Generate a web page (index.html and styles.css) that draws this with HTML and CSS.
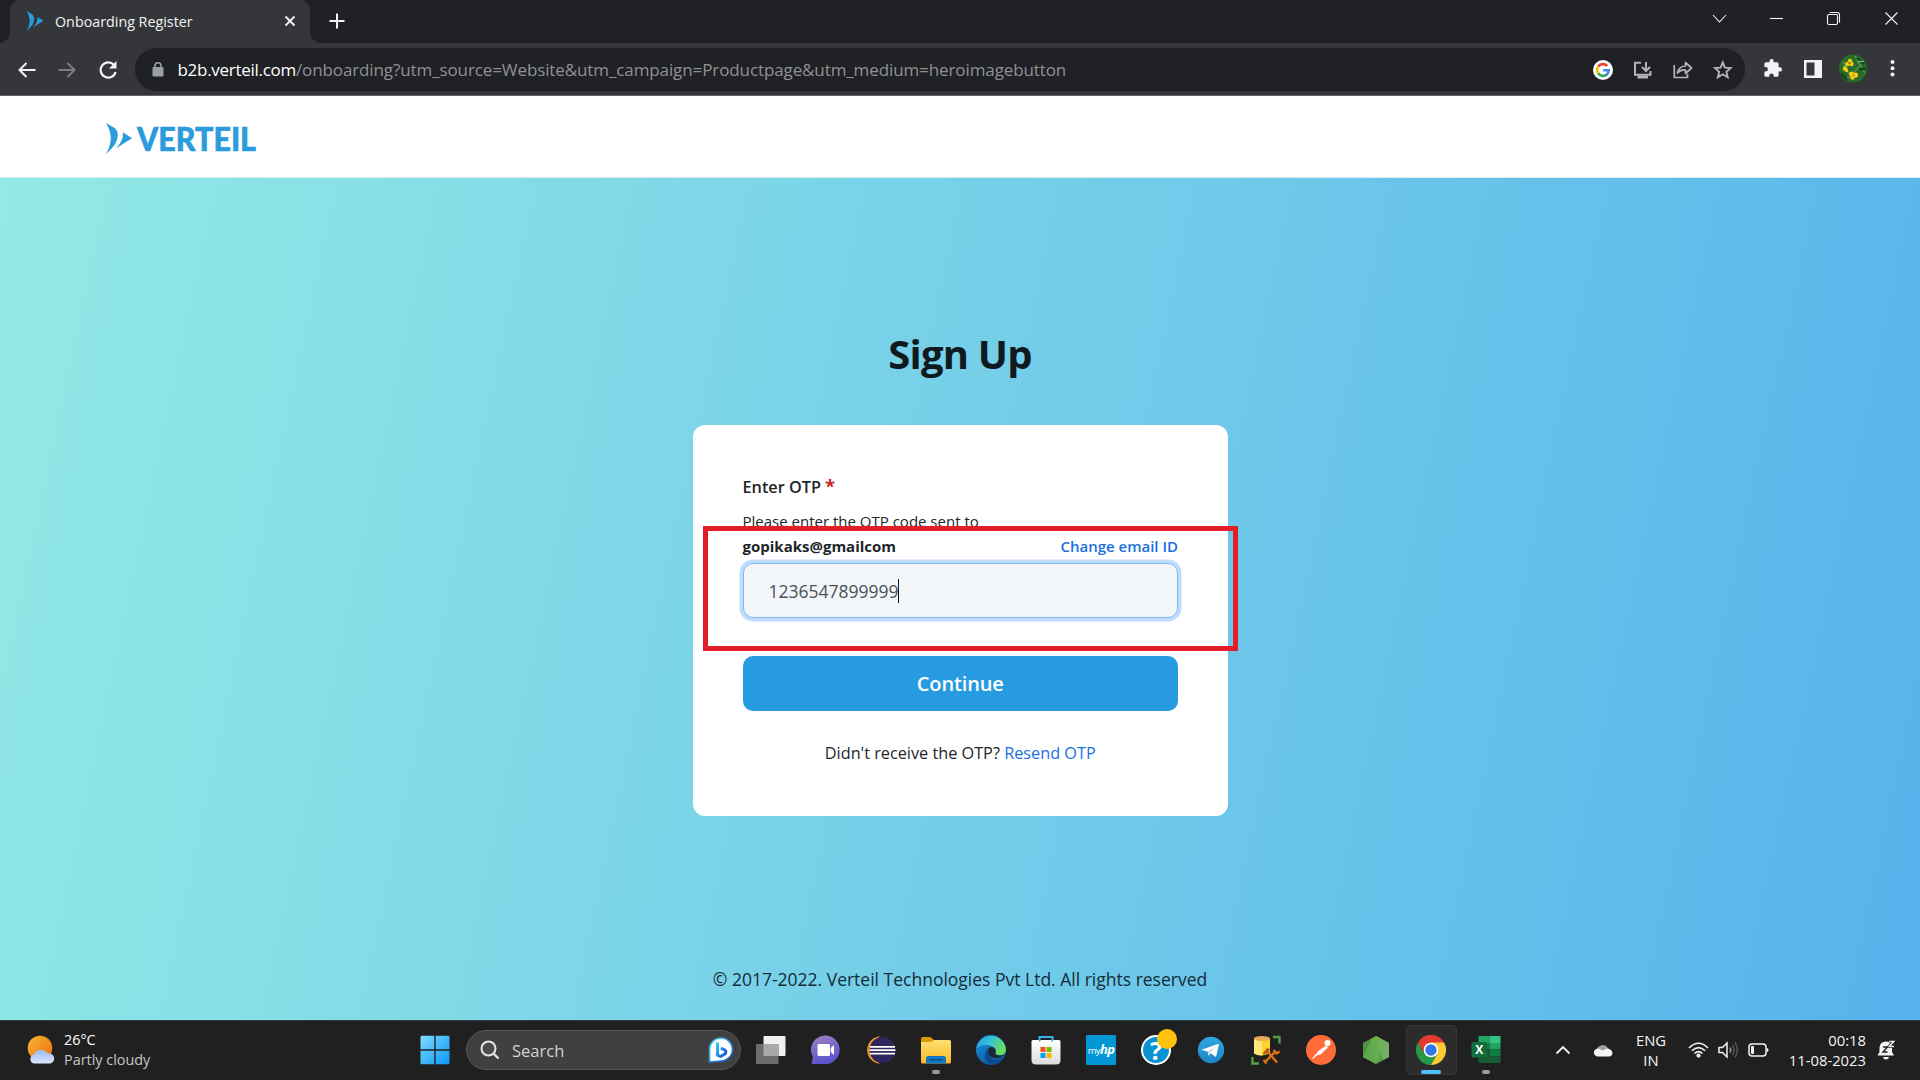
FILE: index.html
```html
<!DOCTYPE html>
<html lang="en">
<head>
<meta charset="utf-8">
<title>Onboarding Register</title>
<link rel="stylesheet" href="styles.css">
</head>
<body>
<svg width="0" height="0" class="defs">
  <defs>
    <symbol id="mark" viewBox="0 0 26 31">
      <path d="M0 0L8.600 5Q12 7.500 11.800 12.500Q11.400 17 9 21.300Q5.500 26.500 0 31Q4.600 23 4.800 15.500Q4.800 8 0 0Z"/>
      <path d="M17 9.300L26 15.200L10.200 25.200Q14.500 20.500 15.800 17Q17 14 17 9.300Z"/>
    </symbol>
    <linearGradient id="gWin" x1="0" y1="0" x2="1" y2="1"><stop offset="0" stop-color="#7fdcff"/><stop offset="1" stop-color="#0a97f5"/></linearGradient>
    <linearGradient id="gSun" x1="0" y1="0" x2="1" y2="1"><stop offset="0" stop-color="#f5b92e"/><stop offset="1" stop-color="#f06a10"/></linearGradient>
    <linearGradient id="gCloud" x1="0" y1="0" x2="0" y2="1"><stop offset="0" stop-color="#9bbaf5"/><stop offset="1" stop-color="#dbe6fc"/></linearGradient>
    <linearGradient id="gBing" x1="0" y1="0" x2="1" y2="1"><stop offset="0" stop-color="#38c8ee"/><stop offset="1" stop-color="#1a50d8"/></linearGradient>
    <linearGradient id="gChat" x1="0" y1="0" x2="0.300" y2="1"><stop offset="0" stop-color="#a082c0"/><stop offset="1" stop-color="#5a55cc"/></linearGradient>
    <linearGradient id="gFold" x1="0" y1="0" x2="0" y2="1"><stop offset="0" stop-color="#ffdf73"/><stop offset="1" stop-color="#fcb924"/></linearGradient>
    <linearGradient id="gEdgeTop" x1="0" y1="0" x2="1" y2="0.300"><stop offset="0" stop-color="#2b9fe0"/><stop offset="0.500" stop-color="#35c1d8"/><stop offset="1" stop-color="#69dc5c"/></linearGradient>
    <linearGradient id="gEdgeLow" x1="0" y1="0" x2="0.600" y2="1"><stop offset="0" stop-color="#1a92dc"/><stop offset="1" stop-color="#0c59a4"/></linearGradient>
    <linearGradient id="gTel" x1="0" y1="0" x2="0" y2="1"><stop offset="0" stop-color="#31a8e0"/><stop offset="1" stop-color="#1b86c4"/></linearGradient>
    <linearGradient id="gBag" x1="0" y1="0" x2="0" y2="1"><stop offset="0" stop-color="#fff"/><stop offset="1" stop-color="#dcdcdc"/></linearGradient>
  </defs>
</svg>

<header class="tabstrip">
  <div class="tab">
    <svg class="favicon" width="20" height="20"><use href="#mark"/></svg>
    <span class="tab-title">Onboarding Register</span>
    <svg class="tab-close" width="12" height="12" viewBox="0 0 12 12"><path d="M1.500 1.500L10.500 10.500M10.500 1.500L1.500 10.500" stroke="#f1f3f4" stroke-width="1.900"/></svg>
  </div>
  <svg class="newtab" width="16" height="16" viewBox="0 0 16 16"><path d="M8 .500V15.500M.500 8H15.500" stroke="#f1f3f4" stroke-width="2"/></svg>
  <div class="window-buttons">
    <svg width="57" height="37" viewBox="0 0 57 37"><path d="M22 15L28.500 22L35 15"/></svg>
    <svg width="57" height="37" viewBox="0 0 57 37"><path d="M22 18.500H35"/></svg>
    <svg width="57" height="37" viewBox="0 0 57 37"><rect x="22.500" y="14.500" width="10" height="10" rx="1.500"/><path d="M24.500 12.500H32Q34.500 12.500 34.500 15V22.500"/></svg>
    <svg width="57" height="37" viewBox="0 0 57 37"><path d="M23.500 12.500L35.500 24.500M35.500 12.500L23.500 24.500"/></svg>
  </div>
</header>

<nav class="toolbar">
  <div class="nav-buttons">
    <svg width="18" height="16" viewBox="0 0 18 16"><path d="M17.500 8H1.500M8.500 1L1.500 8L8.500 15" fill="none" stroke="#f1f3f4" stroke-width="2"/></svg>
    <svg width="18" height="16" viewBox="0 0 18 16"><path d="M.500 8H16.500M9.500 1L16.500 8L9.500 15" fill="none" stroke="#7d7e81" stroke-width="2"/></svg>
    <svg width="20" height="20" viewBox="0 0 20 20"><path d="M16 5A7.600 7.600 0 1 0 17.600 12" fill="none" stroke="#f1f3f4" stroke-width="2.200"/><path d="M18.500 1V8.500H11Z" fill="#f1f3f4"/></svg>
  </div>
  <div class="omnibox">
    <svg class="lock" width="12" height="15" viewBox="0 0 12 15"><rect x=".500" y="5" width="11" height="9.500" rx="1" fill="#9aa0a6"/><path d="M3 6V3.800A3 3 0 0 1 9 3.800V6" fill="none" stroke="#9aa0a6" stroke-width="1.600"/></svg>
    <div class="url"><span class="host">b2b.verteil.com</span>/onboarding?utm_source=Website&amp;utm_campaign=Productpage&amp;utm_medium=heroimagebutton</div>
    <div class="icon-slots">
      <svg viewBox="0 0 40 40"><circle cx="20" cy="20" r="10" fill="#fff"/><g fill="none" stroke-width="2.600"><path d="M15.200 16.600A5.800 5.800 0 0 1 24.200 16" stroke="#ea4335"/><path d="M15.200 23.300A5.800 5.800 0 0 1 15.200 16.600" stroke="#fbbc05"/><path d="M24 24.300A5.800 5.800 0 0 1 15.200 23.300" stroke="#34a853"/><path d="M20.200 20.200H25.800A5.800 5.800 0 0 1 23.500 24.700" stroke="#4285f4"/></g></svg>
      <svg viewBox="0 0 40 40" fill="none" stroke="#b4b5b7" stroke-width="2"><path d="M18 12.800H12V24.800H27.500V21"/><path d="M23 12V20.500M19 17L23 21L27 17"/><path d="M14.500 27H25" stroke-width="3"/></svg>
      <svg viewBox="0 0 40 40" fill="none" stroke="#b4b5b7" stroke-width="1.700"><path d="M11.300 15V27.500H24.500V24"/><path d="M14.500 23Q15.500 16.500 22.500 16V12.500L28.500 18L22.500 23.500V20Q17.500 19.500 14.500 23Z" stroke-linejoin="round"/></svg>
      <svg viewBox="0 0 40 40"><path d="M19.800 12.500L22 17.600L27.600 18.100L23.400 21.800L24.700 27.200L19.800 24.300L14.900 27.200L16.200 21.800L12 18.100L17.600 17.600Z" fill="none" stroke="#b4b5b7" stroke-width="1.900"/></svg>
    </div>
  </div>
  <div class="icon-slots browser-actions">
    <svg viewBox="0 0 40 40"><path d="M26.800 18.200H25.600V14.800Q25.600 13.200 24 13.200H20.700V12.200A2.100 2.100 0 0 0 16.500 12.200V13.200H13Q11.400 13.200 11.400 14.800V18H12.600A2.300 2.300 0 0 1 12.600 22.600H11.400V26.300Q11.400 27.800 13 27.800H16.300V26.600A2.200 2.200 0 0 1 20.700 26.600V27.800H24Q25.600 27.800 25.600 26.200V22.600H26.800A2.200 2.200 0 0 0 26.800 18.200Z" fill="#f1f3f4"/></svg>
    <svg viewBox="0 0 40 40"><path d="M11 11H29V29H11ZM13.500 13.500V26.500H21.500V13.500Z" fill="#f1f3f4" fill-rule="evenodd"/></svg>
    <svg viewBox="0 0 40 40"><circle cx="20" cy="19.500" r="14" fill="#2a6b2c"/><path d="M10 12L17 27M14 30L30 14M22 7L32 24" stroke="#4b9448" stroke-width="1.500"/><path d="M24 9L31 15M8 24L14 31M26 20L33 20" stroke="#16421c" stroke-width="2.500"/><path d="M24 12.500H31" stroke="#7fb893" stroke-width="1.200"/><g fill="#f3cf14"><circle cx="17" cy="12" r="2.200"/><circle cx="14.500" cy="15" r="2.300"/><circle cx="18.500" cy="15" r="2.200"/><circle cx="12" cy="19.500" r="2.200"/><circle cx="13.500" cy="21.500" r="1.700"/><circle cx="18.500" cy="25" r="2.400"/><circle cx="22.500" cy="26" r="2.600"/><circle cx="19.500" cy="28.500" r="2.300"/></g><circle cx="16.500" cy="14" r="1.200" fill="#a86a10"/><circle cx="20.300" cy="26.500" r="1.300" fill="#d48d0a"/></svg>
    <svg viewBox="0 0 40 40" fill="#f1f3f4"><circle cx="19.500" cy="13" r="2"/><circle cx="19.500" cy="19.200" r="2"/><circle cx="19.500" cy="25.400" r="2"/></svg>
  </div>
</nav>

<div class="site-header">
  <svg class="logo" width="170" height="46" viewBox="0 -6 170 46" fill="#2a9bdc"><use href="#mark" x="0" y="1" width="26" height="31"/><text x="31" y="28.500" textLength="119" lengthAdjust="spacingAndGlyphs">VERTEIL</text></svg>
</div>

<main class="hero">
  <h1>Sign Up</h1>
  <section class="card">
    <label class="field-label">Enter OTP <span class="required">*</span></label>
    <p class="hint">Please enter the OTP code sent to</p>
    <div class="email-row"><strong>gopikaks@gmailcom</strong><a class="change">Change email ID</a></div>
    <div class="otp-input">1236547899999<span class="caret"></span></div>
    <button class="continue">Continue</button>
    <p class="resend">Didn't receive the OTP? <a>Resend OTP</a></p>
    <div class="highlight"></div>
  </section>
  <footer class="copyright">© 2017-2022. Verteil Technologies Pvt Ltd. All rights reserved</footer>
</main>

<div class="taskbar">
  <div class="weather">
    <svg width="30" height="30" viewBox="0 0 30 30"><circle cx="13" cy="13" r="12.300" fill="url(#gSun)"/><path d="M7 28.500A4.600 4.600 0 0 1 7 19.500A7.500 7.500 0 0 1 20.500 18.500A5 5 0 0 1 23.500 28.500Z" fill="url(#gCloud)"/></svg>
    <div class="weather-text"><span>26°C</span><span class="dim">Partly cloudy</span></div>
  </div>
  <div class="app"><svg viewBox="0 0 30 30" fill="url(#gWin)"><path d="M.500 2Q.500 .700 2 .700H14.300V14.300H.500ZM15.700 .700H28Q29.500 .700 29.500 2V14.300H15.700ZM.500 15.700H14.300V29.300H2Q.500 29.300 .500 28ZM15.700 15.700H29.500V28Q29.500 29.300 28 29.300H15.700Z"/></svg></div>
  <div class="search">
    <svg width="20" height="20" viewBox="0 0 20 20"><circle cx="8.500" cy="8.500" r="7" fill="#4c4c4c" stroke="#e6e6e6" stroke-width="2"/><path d="M13.500 13.500L18.500 18.500" stroke="#e6e6e6" stroke-width="2.400"/></svg>
    <span>Search</span>
    <svg class="bing" width="26" height="26" viewBox="0 0 26 26"><path d="M1.500 25V12.500A11.500 11.500 0 1 1 13 24Z" fill="#fff" stroke="url(#gBing)" stroke-width="1.600"/><path d="M9.500 5.500V18L12.500 19.500L17.500 16.500Q18.500 14 16.500 12.800L12.800 11.200" fill="none" stroke="url(#gBing)" stroke-width="3"/></svg>
  </div>
  <div class="app"><svg viewBox="0 0 30 30"><rect x="7.500" y="1" width="22" height="20" rx="1" fill="#f0f0f0"/><rect x="0" y="9" width="22.500" height="20" rx="1" fill="#6d6d6d"/><path d="M7.500 9H22.500V21H7.500Z" fill="#a9a9a9"/></svg></div>
  <div class="app"><svg viewBox="0 0 30 30"><path d="M.500 29L2 22A14.300 14.300 0 1 1 15 29Z" fill="url(#gChat)"/><rect x="6.500" y="9" width="12.500" height="12" rx="1.500" fill="#fff"/><path d="M19.800 13L23 10V20L19.800 17Z" fill="#fff"/></svg></div>
  <div class="app"><svg viewBox="0 0 30 30"><path d="M12 1.500A13.800 13.800 0 0 0 12 28.500L14 28.500A16 16 0 0 1 14 1.500Z" fill="#f0932a"/><circle cx="16.500" cy="15" r="13" fill="#30255c"/><path d="M4 11.800H29M3.500 15.200H29.500M4 18.700H29" stroke="#fff" stroke-width="1.800"/></svg></div>
  <div class="app running"><svg viewBox="0 0 30 30"><path d="M0 4Q0 2 2 2H9.500L13 5H20V10H0Z" fill="#d99a0e"/><path d="M0 7H10L13 5H28.500Q30 5 30 6.500V27Q30 28.500 28.500 28.500H1.500Q0 28.500 0 27Z" fill="url(#gFold)"/><path d="M5 28.500V23.500Q5 21 7.500 21H22.500Q25 21 25 23.500V28.500Z" fill="#1277c4"/><path d="M8.500 24.700H21.500" stroke="#0b4d86" stroke-width="1.400"/></svg></div>
  <div class="app"><svg viewBox="0 0 30 30"><circle cx="15" cy="15" r="15" fill="url(#gEdgeLow)"/><path d="M.300 13.500A15 15 0 0 1 30 14.500C30 19.500 25 21.500 20.500 19.800C18.500 19 19.800 17.500 19.800 15.500C19.500 10.500 7 7 .300 13.500Z" fill="url(#gEdgeTop)"/><path d="M12.500 13.500C10 19 14.500 26 23 24.500L28 22.500A15 15 0 0 1 16 30C7 26 7.500 16 12.500 13.500Z" fill="#0a4b8f"/><path d="M12.500 13.500C14.500 11 18.500 11.500 19.800 15.500C19.800 17.500 18.500 19 20.500 19.800Q24 21.300 28 19.500C24 25.500 9 24 12.500 13.500Z" fill="#1c2630"/></svg></div>
  <div class="app"><svg viewBox="0 0 30 30"><path d="M8.500 6.500V2H21.500V6.500" fill="none" stroke="#34b4ea" stroke-width="2"/><path d="M.500 6.500Q.500 5 2 5H28Q29.500 5 29.500 6.500V25Q29.500 29.500 25 29.500H5Q.500 29.500 .500 25Z" fill="url(#gBag)"/><path d="M8 5H9.500V6.500H8ZM20.500 5H22V6.500H20.500Z" fill="#2b9fd8"/><path d="M9.500 12H14.500V17H9.500Z" fill="#f05022"/><path d="M15.500 12H20.500V17H15.500Z" fill="#7db900"/><path d="M9.500 18H14.500V23H9.500Z" fill="#00a3ee"/><path d="M15.500 18H20.500V23H15.500Z" fill="#ffb800"/></svg></div>
  <div class="app"><div class="myhp">my<b>hp</b></div></div>
  <div class="app"><div class="help">?</div><span class="badge"></span></div>
  <div class="app"><svg viewBox="0 0 30 30"><circle cx="15" cy="15" r="13.200" fill="url(#gTel)"/><path d="M5.500 14.800L21.800 9Q23 8.700 22.700 10L20.300 21Q20 22 19 21.500L14.800 18.300L12.800 20.500L12.300 20.300L12 16.800Z" fill="#fff"/><path d="M12 16.800L19.500 11.500L13.500 17.500L12.600 20.300Z" fill="#a9cbe0"/></svg></div>
  <div class="app"><svg viewBox="0 0 30 30"><path d="M22 2H28.500V8.500M1.500 22V28.500H8" fill="none" stroke="#4da14b" stroke-width="2.400"/><path d="M3 3.500H19V18Q11 22.500 3 18.500Z" fill="#fbd32c"/><path d="M3 3.500H11V20.500Q6 20.500 3 18.500Z" fill="#ffe87a"/><ellipse cx="11" cy="3.500" rx="8" ry="2.500" fill="#e8a75a"/><path d="M14 27L25 16M17 17L26 27.500" stroke="#e0740f" stroke-width="2.300"/><path d="M11.500 18.500L16 13L19 14L17 18L13.500 19.500Z" fill="#b85c14"/><path d="M22.500 15L25.500 18.500L28.500 16.500M12.500 25L15.500 28.500" fill="none" stroke="#e0740f" stroke-width="2.200"/></svg></div>
  <div class="app"><svg viewBox="0 0 30 30"><circle cx="15" cy="15" r="15" fill="#ff6c37"/><circle cx="21.500" cy="8" r="3" fill="#fff"/><path d="M20 10.500L22 12.500L14.500 19.500L10.500 20.500L7 24L6 23.500L9.500 19.500L13 15.500Z" fill="#fff"/></svg></div>
  <div class="app"><svg viewBox="0 0 30 30"><path d="M15 1L28 8V22L15 29L2 22V8Z" fill="#58a14b"/><path d="M15 1L28 8V22L22 25Z" fill="#76ac64"/><path d="M2 8L10 4L15 29L2 22Z" fill="#4a9140"/><path d="M15 1L10 4L2 22L15 29L24 6Z" fill="#69b356" opacity=".700"/></svg></div>
  <div class="app active"><svg viewBox="0 0 30 30"><path d="M15 15L2 7.500A15 15 0 0 1 28 7.500Z" fill="#e33b2e"/><path d="M15 15V7.500H28A15 15 0 0 1 15 30Z" fill="#fcc934"/><path d="M2 7.500A15 15 0 0 0 15 30L21.500 18.700L15 15L8.500 18.700Z" fill="#279847"/><path d="M2 7.500L8.500 18.700L15 7.500Z" fill="#e33b2e"/><circle cx="15" cy="15" r="7.300" fill="#fff"/><circle cx="15" cy="15" r="5.700" fill="#2f76e8"/></svg></div>
  <div class="app running"><svg viewBox="0 0 30 30"><path d="M7.500 1H18.500V8H7.500Z" fill="#21a366"/><path d="M18.500 1H29.500V8H18.500Z" fill="#33c481"/><path d="M7.500 8H18.500V14.500H7.500Z" fill="#107c41"/><path d="M18.500 8H29.500V14.500H18.500Z" fill="#21a366"/><path d="M18.500 14.500H29.500V21.500H18.500Z" fill="#107c41"/><path d="M7.500 14.500H18.500V21.500H29.500V28H7.500Z" fill="#185c37"/><rect x=".500" y="7" width="15.500" height="15.500" rx="1" fill="#0f6e3a"/><text class="excel-letter" x="8.200" y="19" text-anchor="middle">X</text></svg></div>

  <div class="tray">
    <svg width="16" height="12" viewBox="0 0 16 12"><path d="M1.500 9.500L8 3L14.500 9.500" fill="none" stroke="#f2f2f2" stroke-width="1.900"/></svg>
    <svg class="cloud" width="21" height="14" viewBox="0 0 21 14"><path d="M5 6A6 5.500 0 0 1 16 5L18 8L4 9Z" fill="#a0a0a0"/><path d="M5 13.500A4 4 0 0 1 4 6Q7 4.500 10 7.500L15.500 5.500Q20.500 6.500 20.500 10Q20 13.500 17 13.500Z" fill="#f5f5f5"/></svg>
    <div class="lang"><span>ENG</span><span>IN</span></div>
    <svg class="wifi" width="21" height="16" viewBox="0 0 21 16" fill="none" stroke="#f2f2f2" stroke-width="1.600"><path d="M1 6Q10.500 -3.500 20 6M3.800 8.800Q10.500 2.300 17.200 8.800M6.500 11.500Q10.500 7.800 14.500 11.500"/><circle cx="10.500" cy="13.600" r="1.300" fill="#f2f2f2"/></svg>
    <svg class="volume" width="21" height="18" viewBox="0 0 21 18" fill="none" stroke="#f2f2f2" stroke-width="1.500"><path d="M1 6.500H4.500L9 2V16L4.500 11.500H1Z"/><path d="M12 6.500Q13.500 9 12 11.500" stroke="#a0a0a0"/><path d="M14.500 4Q17.500 9 14.500 14M17 1.500Q21.500 9 17 16.500" stroke="#565656"/></svg>
    <svg class="battery" width="21" height="14" viewBox="0 0 21 14"><rect x="1" y="1" width="17" height="12" rx="3" fill="none" stroke="#f2f2f2" stroke-width="1.500"/><rect x="3" y="3" width="3" height="8" rx="1" fill="#f2f2f2"/><path d="M19 5Q20.500 5 20.500 7Q20.500 9 19 9Z" fill="#f2f2f2"/></svg>
    <div class="clock"><span>00:18</span><span>11-08-2023</span></div>
    <svg class="bell" width="19" height="20" viewBox="0 0 19 20"><path d="M.500 15.500L2.500 12V7.500Q3 1.500 9 1.500Q14 1.500 15 5.500V12L17 15.500Z" fill="#f2f2f2"/><path d="M6 17H12Q11.500 19.500 9 19.500Q6.500 19.500 6 17Z" fill="#f2f2f2"/><path d="M6 7H10.500L6 12H10.500" fill="none" stroke="#202020" stroke-width="1.400"/><path d="M12.300 1.500H16.800L12.300 6.500H17" fill="none" stroke="#202020" stroke-width="3"/><path d="M12.300 1.500H16.800L12.300 6.500H17" fill="none" stroke="#f2f2f2" stroke-width="1.400"/></svg>
  </div>
</div>
</body>
</html>
```
FILE: styles.css
```css
* { box-sizing: border-box; }
body {
  margin: 0;
  width: 1920px;
  height: 1080px;
  overflow: hidden;
  display: flex;
  flex-direction: column;
  font-family: "Open Sans", "Noto Sans", sans-serif;
}
svg { display: block; flex: none; }
.defs { position: absolute; }
h1, p { margin: 0; }

/* Browser window */
.tabstrip {
  height: 43px;
  flex: none;
  display: flex;
  align-items: flex-start;
  background: #202124;
  padding-left: 10px;
}
.tab {
  position: relative;
  width: 300px;
  height: 43px;
  display: flex;
  align-items: center;
  padding: 0 14px 1px 15px;
  background: #35363a;
  border-radius: 10px 10px 0 0;
}
.tab::before, .tab::after {
  content: "";
  position: absolute;
  bottom: 0;
  width: 10px;
  height: 10px;
}
.tab::before { left: -10px; background: radial-gradient(circle at 0 0, #202124 9.500px, #35363a 10px); }
.tab::after { right: -10px; background: radial-gradient(circle at 100% 0, #202124 9.500px, #35363a 10px); }
.favicon { fill: #2a9bdc; }
.tab-title { margin-left: 10px; font-size: 14.300px; color: #f1f3f4; white-space: nowrap; }
.tab-close { margin-left: auto; }
.newtab { margin: 13px 0 0 19px; }
.window-buttons { display: flex; margin: 0 1px 0 auto; }
.window-buttons svg { fill: none; stroke: #f4f4f4; stroke-width: 1.100; }

.toolbar {
  height: 53px;
  flex: none;
  display: flex;
  padding: 5px 7px 0 0;
  background: #35363a;
  border-bottom: 1px solid #606164;
}
.nav-buttons {
  width: 135px;
  height: 43px;
  display: flex;
  align-items: center;
  gap: 22px;
  padding-left: 18px;
}
.omnibox {
  width: 1610px;
  height: 43px;
  display: flex;
  align-items: center;
  padding: 0 2px 0 17px;
  border-radius: 22px;
  background: #202124;
}
.url { margin-left: 13.500px; font-size: 17px; letter-spacing: -0.105px; color: #8f9194; white-space: nowrap; }
.host { color: #fff; letter-spacing: -0.290px; }
.icon-slots { display: flex; margin-left: auto; }
.icon-slots svg { width: 40px; height: 40px; }
.browser-actions { margin-top: 1px; }

/* Page */
.site-header {
  height: 82px;
  flex: none;
  padding: 20px 0 0 106px;
  background: #fff;
  border-bottom: 1px solid #dcebee;
}
.logo text { font: 900 33px Lato, "Open Sans", sans-serif; stroke: #2a9bdc; stroke-width: 0.600; }
.hero {
  height: 842px;
  flex: none;
  display: flex;
  flex-direction: column;
  align-items: center;
  padding: 146px 0 28px;
  background: linear-gradient(102deg, #93e9e5, #56b3ec);
}
h1 { font-size: 40px; line-height: 60px; font-weight: 700; letter-spacing: -0.800px; color: #0f1a20; }
.card {
  position: relative;
  width: 535px;
  height: 391px;
  margin-top: 41px;
  padding: 50px 49.500px 0 50px;
  display: flex;
  flex-direction: column;
  background: #fff;
  border-radius: 12px;
  color: #212529;
  line-height: 24px;
}
.field-label { font-size: 16.250px; font-weight: 600; }
.required { color: #c5281c; font-size: 18.500px; line-height: 20px; font-weight: 700; }
.hint { margin-top: 10px; font-size: 15px; }
.email-row { display: flex; justify-content: space-between; margin-top: 1px; font-size: 15px; }
.email-row strong { font-weight: 700; }
.card a { color: #1a6fe0; }
.card a.change { font-weight: 600; }
.otp-input {
  height: 55px;
  margin-top: 5px;
  padding-left: 25px;
  display: flex;
  align-items: center;
  font-size: 17.500px;
  color: #495057;
  background: #f3f6f9;
  border: 1px solid #80b8f4;
  border-radius: 10px;
  box-shadow: 0 0 0 3.500px #bfdcfe;
}
.caret { width: 1px; height: 24px; margin-left: -1px; background: #111; }
.continue {
  height: 55px;
  margin-top: 38px;
  border: 0;
  border-radius: 10px;
  background: #269be1;
  color: #fff;
  font: 600 20px "Open Sans", "Noto Sans", sans-serif;
  letter-spacing: -0.150px;
}
.resend { margin-top: 30px; font-size: 16.250px; text-align: center; }
.highlight {
  position: absolute;
  left: 10px;
  top: 101px;
  width: 535px;
  height: 125px;
  border: 5px solid #e41e26;
}
.copyright { margin-top: auto; font-size: 17.500px; line-height: 26px; color: #142c38; }

/* Taskbar */
.taskbar {
  height: 60px;
  flex: none;
  display: flex;
  align-items: center;
  padding-bottom: 1px;
  background: #202020;
  border-top: 1px solid #2c3c42;
  color: #fff;
  font-size: 15px;
  line-height: 20px;
}
.weather { width: 407px; display: flex; align-items: center; padding-left: 27px; }
.weather-text { display: flex; flex-direction: column; margin-left: 7px; font-size: 14.400px; line-height: 20px; }
.dim { color: #c6c6c6; }
.app {
  position: relative;
  width: 55px;
  height: 50px;
  display: flex;
  align-items: center;
  justify-content: center;
  flex: none;
}
.app svg { width: 30px; height: 30px; }
.search {
  width: 275px;
  height: 40px;
  margin: 0 2.500px 0 4px;
  display: flex;
  align-items: center;
  padding: 0 6.500px 0 13px;
  border: 1px solid #575757;
  border-radius: 20px;
  background: #404040;
  font-size: 16.500px;
  color: #d2d2d2;
  flex: none;
}
.search span { margin-left: 12px; padding-top: 1px; }
.bing { margin-left: auto; }
.running::after, .active::after {
  content: "";
  position: absolute;
  bottom: 1px;
  width: 8px;
  height: 4px;
  border-radius: 2px;
  background: #9b9b9b;
}
.active { width: 51px; margin: 0 2px; background: #2c2c2c; border: 1px solid #383838; border-radius: 5px; }
.active::after { bottom: 0; width: 20px; background: #4cc2ff; }
.myhp {
  width: 30px;
  height: 30px;
  background: #0096d6;
  border-radius: 1px;
  text-align: center;
  font-size: 9.500px;
  line-height: 28px;
  letter-spacing: -0.600px;
}
.myhp b { font-size: 13px; font-style: italic; }
.help {
  width: 30px;
  height: 30px;
  border: 2px solid #fff;
  border-radius: 50%;
  background: #0a93d2;
  text-align: center;
  font-size: 25px;
  font-weight: 700;
  line-height: 26px;
}
.badge {
  position: absolute;
  left: 28px;
  top: 4px;
  width: 20px;
  height: 20px;
  border-radius: 50%;
  background: #ffc20e;
}
.excel-letter { font: 700 12px "Open Sans", sans-serif; fill: #fff; }
.tray { display: flex; align-items: center; margin-left: auto; padding-right: 24px; color: #f4f4f4; }
.lang, .clock { display: flex; flex-direction: column; font-size: 14.800px; }
.cloud { margin-left: 21px; }
.lang { width: 50px; margin-left: 13px; align-items: center; }
.wifi { margin-left: 12px; }
.volume { margin-left: 9px; }
.battery { margin-left: 9px; }
.clock { width: 97px; align-items: flex-end; }
.bell { margin-left: 11px; }
```
